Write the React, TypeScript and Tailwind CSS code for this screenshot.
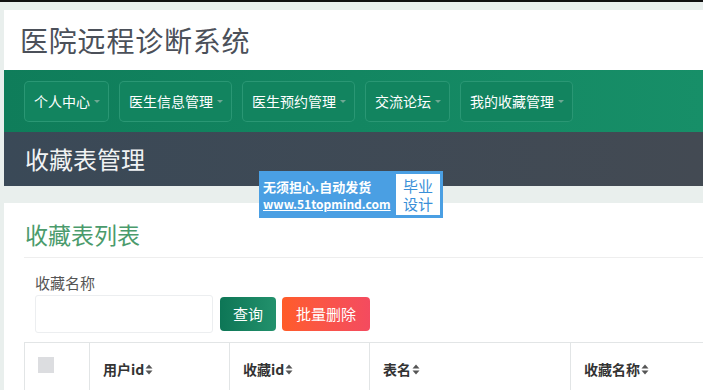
import React from 'react';

const navItems = ['个人中心', '医生信息管理', '医生预约管理', '交流论坛', '我的收藏管理'];
const columns = [
  { label: '用户id', w: 'w-[140px]' },
  { label: '收藏id', w: 'w-[140px]' },
  { label: '表名', w: 'w-[201px]' },
  { label: '收藏名称', w: 'w-[200px]' },
];

function SortIcon() {
  return (
    <svg width="8" height="11" viewBox="0 0 8 11" className="ml-[1px] inline-block">
      <path d="M4 0.5 L7.5 4.5 H0.5 Z" fill="#555" />
      <path d="M4 10.5 L7.5 6.5 H0.5 Z" fill="#555" />
    </svg>
  );
}

export default function App() {
  return (
    <div
      className="relative w-[703px] h-[390px] overflow-hidden bg-[#e9efed]"
      style={{ fontFamily: '"Noto Sans CJK SC", "Noto Sans", sans-serif' }}
    >
      <div className="h-[2px] bg-[#111]" />
      <div className="pl-[4px] pt-[8px]">
        {/* header */}
        <div className="h-[60px] bg-white flex items-center pl-[16px]">
          <h1 className="text-[28px] leading-none text-[#4b5059] tracking-[0.8px]">医院远程诊断系统</h1>
        </div>

        {/* nav */}
        <div className="h-[62px] bg-gradient-to-r from-[#0f7d5a] to-[#178f68] flex items-center pl-[20px] gap-[10px]">
          {navItems.map((item) => (
            <div
              key={item}
              className="h-[41px] pl-[9px] pr-[8px] flex items-center rounded-[5px] border border-[#3aa482]/60 bg-[#12845f] text-white text-[14px] shrink-0"
            >
              <span>{item}</span>
              <span className="ml-[4px] mt-[1px] w-0 h-0 border-l-[3px] border-r-[3px] border-t-[3px] border-l-transparent border-r-transparent border-t-[#6fa893]" />
            </div>
          ))}
        </div>

        {/* page title bar */}
        <div className="h-[54px] bg-gradient-to-r from-[#3a4957] to-[#434a53] flex items-center pl-[21px]">
          <h2 className="text-[24px] text-[#f1f3f4] leading-none">收藏表管理</h2>
        </div>

        <div className="h-[17px]" />

        {/* card */}
        <div className="bg-white pl-[20px] pt-[20px] h-[200px]">
          <h3 className="text-[23px] leading-none text-[#4b9b6c] pl-[1px]">收藏表列表</h3>
          <div className="mt-[11px] h-px bg-[#eeeeee]" />
          <div className="pl-[11px] pt-[17px]">
            <div className="text-[15px] text-[#555] leading-none">收藏名称</div>
            <div className="flex items-center gap-[7px] mt-[5px]">
              <div className="w-[178px] h-[38px] border border-[#eceef0] rounded-[3px] shrink-0" />
              <button className="h-[34px] w-[56px] rounded-[4px] bg-gradient-to-r from-[#0d7656] to-[#22916c] text-white text-[15px] shrink-0">查询</button>
              <button className="h-[34px] w-[88px] rounded-[4px] bg-gradient-to-r from-[#ff5c27] to-[#f44b5f] text-white text-[15px] ml-[-1px] shrink-0">批量删除</button>
            </div>
          </div>
          <div className="mt-[9px] flex border-t border-l border-[#e2e5e6] h-[60px]">
            <div className="w-[65px] shrink-0 border-r border-[#e2e5e6] pl-[13px] pt-[14px]">
              <div className="w-[16px] h-[16px] bg-[#dcdde0]" />
            </div>
            {columns.map((c) => (
              <div
                key={c.label}
                className={`${c.w} shrink-0 border-r border-[#e2e5e6] pl-[13px] pt-[17px] text-[14px] font-bold text-[#333] flex items-start`}
              >
                <span className="leading-[18px]">{c.label}</span>
                <span className="leading-[18px] flex items-center h-[18px]"><SortIcon /></span>
              </div>
            ))}
          </div>
        </div>
      </div>

      {/* watermark overlay */}
      <div className="absolute left-[259px] top-[171px] w-[184px] h-[47px] bg-[#4a9fe3] flex items-center">
        <div className="pl-[4px] flex flex-col text-white leading-none">
          <span className="text-[13px] font-semibold">无须担心.自动发货</span>
          <span className="text-[12px] font-semibold underline mt-[5px]">www.51topmind.com</span>
        </div>
        <div className="ml-auto mr-[3px] w-[44px] h-[41px] bg-white flex flex-col items-center justify-center text-[#3a8fd8] text-[15px] leading-[18px]">
          <span>毕业</span>
          <span>设计</span>
        </div>
      </div>
    </div>
  );
}
